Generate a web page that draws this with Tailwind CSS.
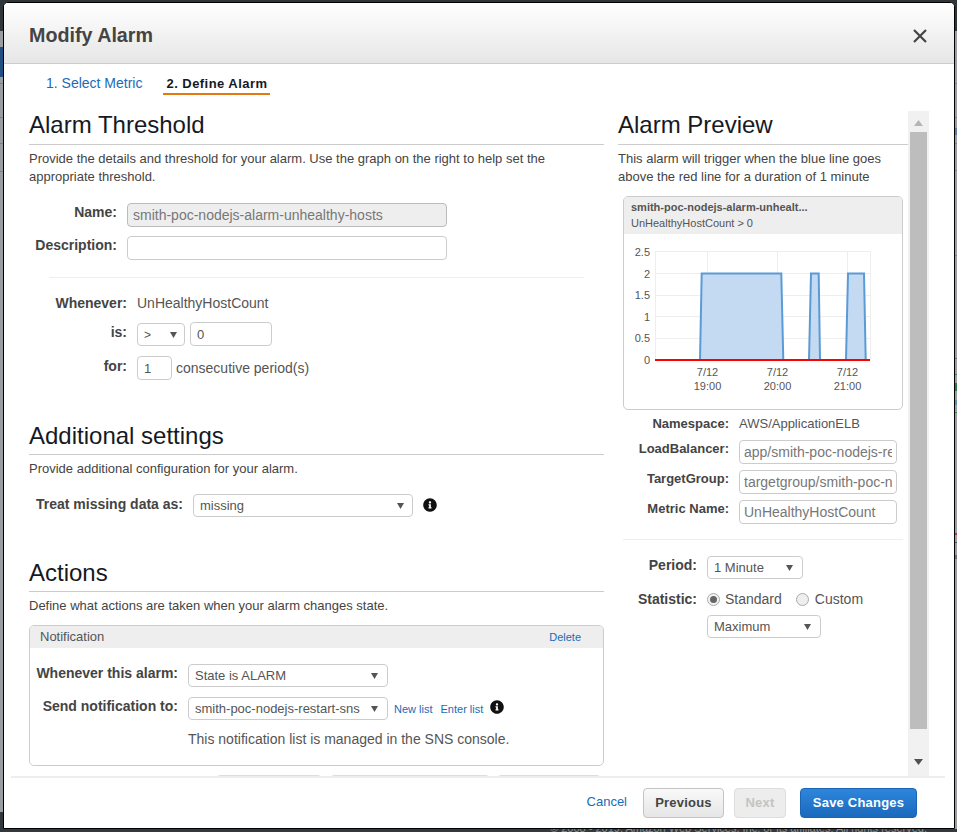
<!DOCTYPE html>
<html>
<head>
<meta charset="utf-8">
<title>Modify Alarm</title>
<script src="https://cdn.jsdelivr.net/npm/@tailwindcss/browser@4"></script>
</head>
<body class="m-0 bg-[#8f9498]">
<div class="relative w-[957px] h-[832px] overflow-hidden bg-[#9a9ea3] font-['Liberation_Sans',Arial,sans-serif] text-[#444]">
  <!-- backdrop -->
  <div class="absolute left-0 top-0 w-full h-[31px] bg-[#30353a]"></div>
  <div class="absolute left-0 top-[47px] w-[4px] h-[30px] bg-[#1f4e80]"></div>
  <div class="absolute left-0 top-[83px] w-[4px] h-px bg-[#7d8287]"></div>
  <div class="absolute left-0 top-[117px] w-[4px] h-px bg-[#7d8287]"></div>
  <div class="absolute left-0 top-[143px] w-[4px] h-px bg-[#7d8287]"></div>
  <div class="absolute left-0 top-[171px] w-[4px] h-px bg-[#7d8287]"></div>
  <div class="absolute left-0 top-[812px] w-[4px] h-[20px] bg-[#33383d]"></div>
  <div class="absolute left-0 top-[829px] w-full h-[3px] bg-[#33383d] overflow-hidden">
    <div class="absolute left-[550px] top-[-7px] whitespace-nowrap text-[11px] leading-[13px] text-[#8b8f93]">© 2008 - 2019, Amazon Web Services, Inc. or its affiliates. All rights reserved.</div>
  </div>
  <div class="absolute left-[955px] top-[83px] w-[2px] h-px bg-[#7d8287]"></div>
  <div class="absolute left-[955px] top-[117px] w-[2px] h-px bg-[#7d8287]"></div>
  <div class="absolute left-[955px] top-[128px] w-[2px] h-[7px] bg-[#5c7ea3]"></div>
  <div class="absolute left-[955px] top-[143px] w-[2px] h-px bg-[#7d8287]"></div>
  <div class="absolute left-[955px] top-[170px] w-[2px] h-px bg-[#7d8287]"></div>
  <div class="absolute left-[955px] top-[255px] w-[2px] h-px bg-[#7d8287]"></div>
  <div class="absolute left-[955px] top-[358px] w-[2px] h-px bg-[#6e7277]"></div>
  <div class="absolute left-[955px] top-[374px] w-[2px] h-px bg-[#2f8a5a]"></div>
  <div class="absolute left-[955px] top-[383px] w-[2px] h-[8px] bg-[#2f7a45]"></div>
  <div class="absolute left-[955px] top-[400px] w-[2px] h-[5px] bg-[#5f8fb5]"></div>
  <div class="absolute left-[955px] top-[412px] w-[2px] h-px bg-[#2f8a5a]"></div>
  <div class="absolute left-[955px] top-[533px] w-[2px] h-[2px] bg-[#c9303a]"></div>
  <div class="absolute left-[955px] top-[542px] w-[2px] h-px bg-[#55595e]"></div>
  <div class="absolute left-[955px] top-[555px] w-[2px] h-[4px] bg-[#6e7277]"></div>

  <!-- modal -->
  <div class="absolute left-[3px] top-[2px] w-[952px] h-[827px] flex flex-col bg-white border border-black rounded-t-[5px] overflow-hidden">
    <header class="h-[61px] shrink-0 flex items-center justify-between pl-[25px] pr-[27px] border-b border-[#ccc] bg-gradient-to-b from-white to-[#e6e6e6]">
      <h1 class="text-[19.7px] font-bold text-[#444] mt-[5px]">Modify Alarm</h1>
      <svg class="w-[14px] h-[14px] mt-[5px]" viewBox="0 0 14 14"><path d="M1 1L13 13M13 1L1 13" stroke="#444" stroke-width="2.2" fill="none"/></svg>
    </header>

    <nav class="h-[47px] shrink-0 flex items-start pl-[42px] pt-[9px] text-[14px] leading-[20px]">
      <a class="text-[#1a6bb8] mr-[21px]">1. Select Metric</a>
      <a class="px-[3px] pt-px h-[19px] font-bold text-[13px] text-[#16191f] tracking-[0.45px] border-b-2 border-[#e47911] box-content">2. Define Alarm</a>
    </nav>

    <div class="h-[665px] shrink-0 flex pl-[25px] overflow-hidden relative">
      <!-- left column -->
      <section class="w-[575px] shrink-0 text-[14px]">
        <h2 class="text-[24px] leading-[28px] text-[#16191f] h-[33px] border-b border-[#ccc] box-content">Alarm Threshold</h2>
        <p class="text-[13px] leading-[18px] text-[#444] mt-[5px]">Provide the details and threshold for your alarm. Use the graph on the right to help set the appropriate threshold.</p>

        <div class="flex items-start mt-[17px] h-[24px]">
          <label class="w-[88px] text-right font-bold text-[14px] leading-[18px]">Name:</label>
          <input disabled value="smith-poc-nodejs-alarm-unhealthy-hosts" class="ml-[10px] w-[320px] h-[24px] px-[5px] text-[14px] text-[#777] bg-[#eee] border border-[#bbb] rounded-[4px]">
        </div>
        <div class="flex items-start mt-[9px] h-[24px]">
          <label class="w-[88px] text-right font-bold text-[14px] leading-[18px]">Description:</label>
          <input class="ml-[10px] w-[320px] h-[24px] px-[6px] text-[13px] bg-white border border-[#ccc] rounded-[4px]">
        </div>
        <div class="ml-[20px] w-[535px] mt-[17px] border-t border-[#eee]"></div>

        <div class="flex items-center mt-[16px] h-[18px]">
          <label class="w-[98px] text-right font-bold text-[14px]">Whenever:</label>
          <span class="ml-[10px] text-[14px] text-[#555]">UnHealthyHostCount</span>
        </div>
        <div class="flex items-start mt-[10px] h-[24px]">
          <label class="w-[98px] mt-px text-right font-bold text-[14px] leading-[18px]">is:</label>
          <div class="ml-[10px] w-[48px] h-[23px] mt-px flex items-center justify-between pl-[6px] pr-[7px] border border-[#ccc] rounded-[4px] text-[12px] text-[#555]"><span>&gt;</span><svg class="w-[7px] h-[6px]" viewBox="0 0 7 6"><path d="M0 0H7L3.500 6Z" fill="#555"/></svg></div>
          <input value="0" class="ml-[5px] w-[82px] h-[24px] px-[6px] text-[13px] text-[#555] border border-[#ccc] rounded-[4px]">
        </div>
        <div class="flex items-start mt-[10px] h-[24px]">
          <label class="w-[98px] mt-px text-right font-bold text-[14px] leading-[18px]">for:</label>
          <input value="1" class="ml-[10px] w-[35px] h-[24px] px-[6px] text-[13px] text-[#555] border border-[#ccc] rounded-[4px]">
          <span class="ml-[4px] text-[14px] leading-[24px] text-[#555]">consecutive period(s)</span>
        </div>

        <h2 class="text-[24px] leading-[28px] text-[#16191f] mt-[42px] h-[32px] border-b border-[#ccc] box-content">Additional settings</h2>
        <p class="leading-[18px] mt-[5px] text-[13px]">Provide additional configuration for your alarm.</p>
        <div class="flex items-start mt-[16px] h-[24px]">
          <label class="w-[154px] mt-px text-right font-bold text-[14px] leading-[18px]">Treat missing data as:</label>
          <div class="ml-[10px] w-[220px] h-[23px] flex items-center justify-between pl-[6px] pr-[8px] border border-[#ccc] rounded-[4px] text-[13px] text-[#555]"><span>missing</span><svg class="w-[7px] h-[6px]" viewBox="0 0 7 6"><path d="M0 0H7L3.500 6Z" fill="#555"/></svg></div>
          <svg class="ml-[10px] mt-[4px] w-[14px] h-[14px]" viewBox="0 0 512 512"><path fill="#111" d="M256 8C119 8 8 119.1 8 256c0 137 111 248 248 248s248-111 248-248C504 119.1 393 8 256 8zm0 110c23.2 0 42 18.8 42 42s-18.8 42-42 42-42-18.8-42-42 18.8-42 42-42zm56 254c0 6.6-5.4 12-12 12h-88c-6.6 0-12-5.4-12-12v-24c0-6.6 5.4-12 12-12h12v-64h-12c-6.6 0-12-5.4-12-12v-24c0-6.6 5.4-12 12-12h64c6.6 0 12 5.4 12 12v100h12c6.6 0 12 5.4 12 12v24z"/></svg>
        </div>

        <h2 class="text-[24px] leading-[28px] text-[#16191f] mt-[41px] h-[32px] border-b border-[#ccc] box-content">Actions</h2>
        <p class="leading-[18px] mt-[5px] text-[13px]">Define what actions are taken when your alarm changes state.</p>

        <div class="mt-[10px] h-[141px] border border-[#ccc] rounded-[5px] overflow-hidden">
          <div class="h-[22px] bg-[#eee] flex items-center justify-between pl-[10px] pr-[22px]">
            <span class="text-[13px] text-[#555]">Notification</span>
            <a class="text-[11px] text-[#1a6bb8]">Delete</a>
          </div>
          <div class="flex items-start mt-[16px] h-[24px]">
            <label class="w-[148px] text-right font-bold text-[14px] leading-[18px]">Whenever this alarm:</label>
            <div class="ml-[10px] w-[200px] h-[23px] flex items-center justify-between pl-[6px] pr-[9px] border border-[#ccc] rounded-[4px] text-[13px] text-[#555]"><span>State is ALARM</span><svg class="w-[7px] h-[6px]" viewBox="0 0 7 6"><path d="M0 0H7L3.500 6Z" fill="#555"/></svg></div>
          </div>
          <div class="flex items-start mt-[9px] h-[24px]">
            <label class="w-[148px] text-right font-bold text-[14px] leading-[18px]">Send notification to:</label>
            <div class="ml-[10px] w-[200px] h-[23px] flex items-center justify-between pl-[6px] pr-[9px] border border-[#ccc] rounded-[4px] text-[13px] text-[#555]"><span class="whitespace-nowrap">smith-poc-nodejs-restart-sns</span><svg class="w-[7px] h-[6px] shrink-0" viewBox="0 0 7 6"><path d="M0 0H7L3.500 6Z" fill="#555"/></svg></div>
            <a class="ml-[6px] text-[11px] leading-[24px] text-[#1a6bb8]">New list</a>
            <a class="ml-[8px] text-[11px] leading-[24px] text-[#1a6bb8]">Enter list</a>
            <svg class="ml-[7px] mt-[3px] w-[14px] h-[14px]" viewBox="0 0 512 512"><path fill="#111" d="M256 8C119 8 8 119.1 8 256c0 137 111 248 248 248s248-111 248-248C504 119.1 393 8 256 8zm0 110c23.2 0 42 18.8 42 42s-18.8 42-42 42-42-18.8-42-42 18.8-42 42-42zm56 254c0 6.6-5.4 12-12 12h-88c-6.6 0-12-5.4-12-12v-24c0-6.6 5.4-12 12-12h12v-64h-12c-6.6 0-12-5.4-12-12v-24c0-6.6 5.4-12 12-12h64c6.6 0 12 5.4 12 12v100h12c6.6 0 12 5.4 12 12v24z"/></svg>
          </div>
          <p class="ml-[158px] mt-[8px] text-[14px] leading-[20px] text-[#555]">This notification list is managed in the SNS console.</p>
        </div>

        <div class="flex mt-[9px] ml-[187px]">
          <div class="w-[106px] h-[24px] border border-[#ddd] rounded-[4px]"></div>
          <div class="ml-[8px] w-[160px] h-[24px] border border-[#ddd] rounded-[4px]"></div>
          <div class="ml-[7px] w-[104px] h-[24px] border border-[#ddd] rounded-[4px]"></div>
        </div>
      </section>

      <!-- right column -->
      <section class="w-[290px] ml-[14px] shrink-0">
        <h2 class="text-[24px] leading-[28px] text-[#16191f] h-[33px] border-b border-[#ccc] box-content">Alarm Preview</h2>
        <p class="text-[13px] leading-[18px] mt-[5px] w-[275px]">This alarm will trigger when the blue line goes above the red line for a duration of 1 minute</p>

        <div class="ml-[5px] mt-[10px] w-[280px] h-[214px] border border-[#ccc] rounded-[5px] overflow-hidden">
          <div class="h-[37px] bg-[#eee] pl-[7px] pt-[3px]">
            <div class="text-[11px] leading-[15px] font-bold text-[#555]">smith-poc-nodejs-alarm-unhealt...</div>
            <div class="text-[11px] leading-[16px] text-[#555]">UnHealthyHostCount &gt; 0</div>
          </div>
          <svg class="block" width="278" height="175" viewBox="624 234 278 175" font-family="Liberation Sans, Arial, sans-serif" font-size="11" fill="#555">
            <g stroke="#eee" stroke-width="1" fill="none">
              <path d="M655 251.500H870M655 273.500H870M655 295.500H870M655 316.500H870M655 338.500H870M655.500 251V360M707.500 251V360M777.500 251V360M847.500 251V360M870.500 251V360"/>
            </g>
            <path d="M700 360L701.700 273.500H781.300L783.300 360H809L811 273.500H818.700L820 360H846L848 273.500H864L865.700 360Z" fill="#c4daf2" stroke="none"/>
            <path d="M700 360L701.700 273.500H781.300L783.300 360M809 360L811 273.500H818.700L820 360M846 360L848 273.500H864L865.700 360" fill="none" stroke="#5b9bd5" stroke-width="2"/>
            <path d="M655 360H870" stroke="#f00" stroke-width="2"/>
            <g text-anchor="end">
              <text x="650" y="256">2.5</text>
              <text x="650" y="278">2</text>
              <text x="650" y="299">1.5</text>
              <text x="650" y="321">1</text>
              <text x="650" y="342">0.5</text>
              <text x="650" y="364">0</text>
            </g>
            <g text-anchor="middle">
              <text x="707.500" y="376">7/12</text>
              <text x="707.500" y="390">19:00</text>
              <text x="777.500" y="376">7/12</text>
              <text x="777.500" y="390">20:00</text>
              <text x="847.500" y="376">7/12</text>
              <text x="847.500" y="390">21:00</text>
            </g>
          </svg>
        </div>

        <div class="flex items-start mt-[5px] h-[18px]">
          <label class="w-[111px] text-right font-bold text-[13px] leading-[18px]">Namespace:</label>
          <span class="ml-[10px] text-[13px] leading-[18px] text-[#555]">AWS/ApplicationELB</span>
        </div>
        <div class="flex items-start mt-[7px] h-[24px]">
          <label class="w-[111px] text-right font-bold text-[13px] leading-[18px]">LoadBalancer:</label>
          <input value="app/smith-poc-nodejs-restart" class="ml-[10px] w-[158px] h-[24px] px-[4px] text-[14px] text-[#777] border border-[#ccc] rounded-[4px]">
        </div>
        <div class="flex items-start mt-[6px] h-[24px]">
          <label class="w-[111px] text-right font-bold text-[13px] leading-[18px]">TargetGroup:</label>
          <input value="targetgroup/smith-poc-nodejs" class="ml-[10px] w-[158px] h-[24px] px-[4px] text-[14px] text-[#777] border border-[#ccc] rounded-[4px]">
        </div>
        <div class="flex items-start mt-[6px] h-[24px]">
          <label class="w-[111px] text-right font-bold text-[13px] leading-[18px]">Metric Name:</label>
          <input value="UnHealthyHostCount" class="ml-[10px] w-[158px] h-[24px] px-[4px] text-[14px] text-[#777] border border-[#ccc] rounded-[4px]">
        </div>
        <div class="ml-[5px] w-[280px] mt-[15px] border-t border-[#eee]"></div>

        <div class="flex items-start mt-[16px] h-[23px]">
          <label class="w-[79px] text-right font-bold text-[14px] leading-[18px]">Period:</label>
          <div class="ml-[10px] w-[96px] h-[23px] flex items-center justify-between pl-[6px] pr-[9px] border border-[#ccc] rounded-[4px] text-[13px] text-[#555]"><span>1 Minute</span><svg class="w-[7px] h-[6px]" viewBox="0 0 7 6"><path d="M0 0H7L3.500 6Z" fill="#555"/></svg></div>
        </div>
        <div class="flex items-center mt-[8px] h-[24px]">
          <label class="w-[79px] text-right font-bold text-[14px]">Statistic:</label>
          <span class="ml-[10px] w-[13px] h-[13px] rounded-full border border-[#aaa] bg-[#f3f3f3] flex items-center justify-center"><span class="w-[7px] h-[7px] rounded-full bg-[#666]"></span></span>
          <span class="ml-[5px] text-[14px] text-[#555]">Standard</span>
          <span class="ml-[14px] w-[13px] h-[13px] rounded-full border border-[#aaa] bg-[#eee]"></span>
          <span class="ml-[6px] text-[14px] text-[#555]">Custom</span>
        </div>
        <div class="ml-[89px] mt-[4px] w-[114px] h-[23px] flex items-center justify-between pl-[6px] pr-[9px] border border-[#ccc] rounded-[4px] text-[13px] text-[#555]"><span>Maximum</span><svg class="w-[7px] h-[6px]" viewBox="0 0 7 6"><path d="M0 0H7L3.500 6Z" fill="#555"/></svg></div>
      </section>

      <!-- scrollbar -->
      <div class="w-[21px] h-[665px] shrink-0 bg-[#f1f1f1] flex flex-col items-center">
        <svg class="w-[9px] h-[6px] mt-[9px]" viewBox="0 0 9 6"><path d="M0 6L4.500 0L9 6Z" fill="#b5b5b5"/></svg>
        <div class="w-[17px] h-[597px] mt-[6px] bg-[#bdbdbd]"></div>
        <svg class="w-[9px] h-[6px] mt-[30px]" viewBox="0 0 9 6"><path d="M0 0H9L4.500 6Z" fill="#505050"/></svg>
      </div>
    </div>

    <footer class="ml-[7px] mr-[9px] flex-1 border-t-2 border-[#eee] flex items-start justify-end pt-[10px] pr-[28px]">
      <a class="text-[13px] leading-[30px] text-[#1a6bb8] mr-[16px] -mt-px">Cancel</a>
      <button class="w-[81px] h-[30px] rounded-[4px] border border-[#c4c4c4] bg-gradient-to-b from-[#f9f9f9] to-[#e6e6e6] text-[13px] font-bold text-[#444] tracking-[0.2px]">Previous</button>
      <button class="ml-[10px] w-[52px] h-[30px] rounded-[4px] border border-[#ddd] bg-[#ededed] text-[13px] font-bold text-[#c4c4c4] tracking-[0.2px]">Next</button>
      <button class="ml-[14px] w-[117px] h-[30px] rounded-[4px] border border-[#1b66b4] bg-gradient-to-b from-[#2e86dc] to-[#1a69bd] text-[13px] font-bold text-white tracking-[0.2px]">Save Changes</button>
    </footer>
  </div>
</div>
</body>
</html>
